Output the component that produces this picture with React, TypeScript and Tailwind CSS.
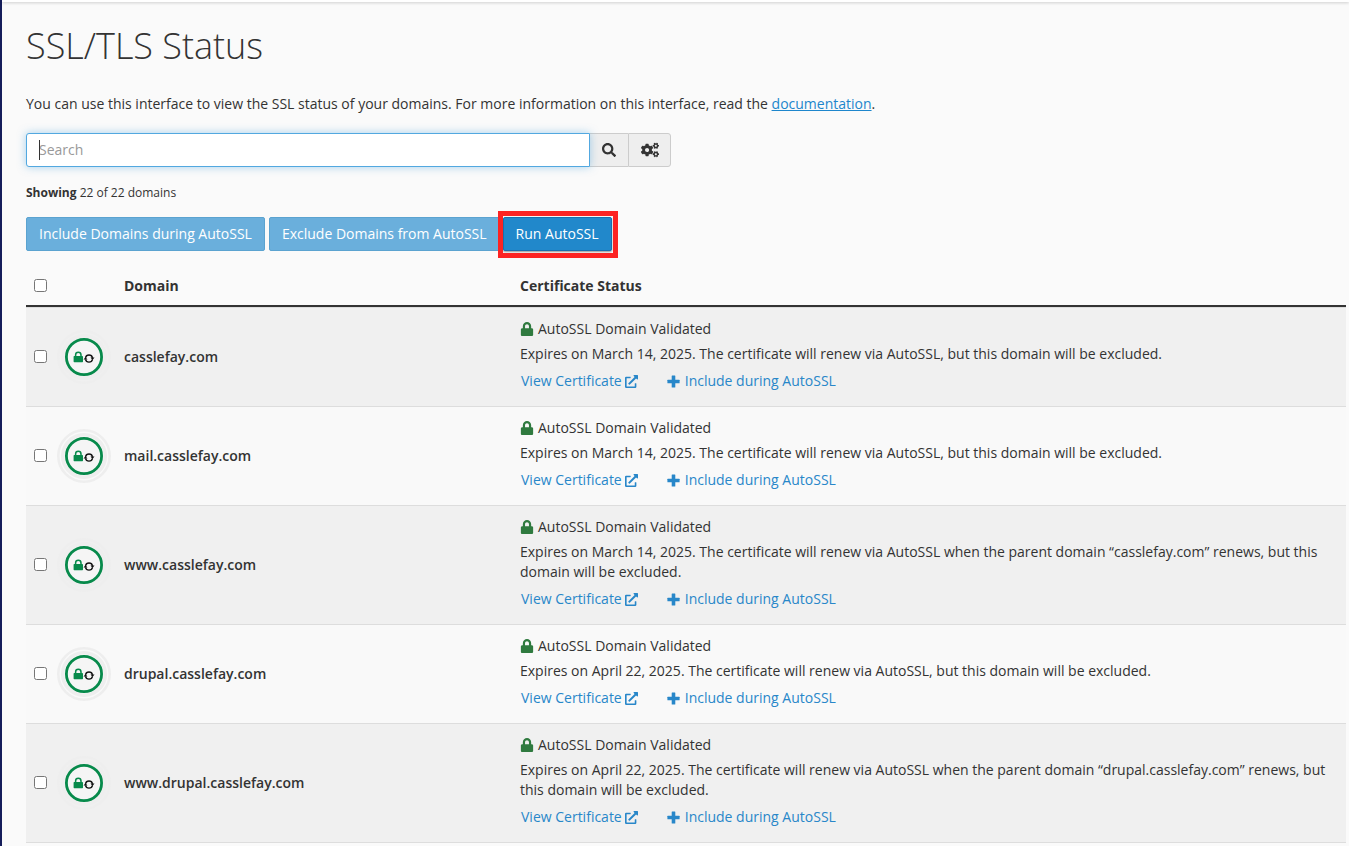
import { useState } from "react";
import { FaCogs, FaExternalLinkAlt, FaLock, FaSearch } from "react-icons/fa";

type Domain = { name: string; expires: string; parent?: string };

const domains: Domain[] = [
  { name: "casslefay.com", expires: "March 14, 2025" },
  { name: "mail.casslefay.com", expires: "March 14, 2025" },
  { name: "www.casslefay.com", expires: "March 14, 2025", parent: "casslefay.com" },
  { name: "drupal.casslefay.com", expires: "April 22, 2025" },
  { name: "www.drupal.casslefay.com", expires: "April 22, 2025", parent: "drupal.casslefay.com" },
];

function StatusBadge() {
  return (
    <svg className="block size-[54px]" viewBox="0 0 54 54" fill="none" aria-hidden="true">
      <circle cx="27" cy="27" r="25.7" stroke="#eeeeee" strokeWidth="2.6" />
      <circle cx="27" cy="27" r="21.3" stroke="#eeeeee" strokeWidth="3.6" />
      <circle cx="27" cy="27" r="17.6" fill="#f5f5f5" stroke="#078a4b" strokeWidth="2.8" />
      <rect x="16.6" y="26" width="9.4" height="6.2" rx="0.7" fill="#078a4b" />
      <path d="M18.6 26.4v-1.5a2.7 2.7 0 0 1 5.4 0v1.5" stroke="#078a4b" strokeWidth="1.5" />
      <path d="M28.5 27.8a3.6 3.6 0 0 1 7 0M35.5 29.4a3.6 3.6 0 0 1-7 0" stroke="#111" strokeWidth="1.4" />
      <path d="M33.5 27.6h4l-2 2.4zM26.5 29.6h4l-2-2.4z" fill="#111" />
    </svg>
  );
}

function PlusIcon() {
  return (
    <svg className="size-[13px]" viewBox="0 0 13 13" fill="currentColor" aria-hidden="true">
      <rect x="4.7" y="0.4" width="3.6" height="12.2" rx="0.5" />
      <rect x="0.4" y="4.7" width="12.2" height="3.6" rx="0.5" />
    </svg>
  );
}

function DomainRow({ domain, checked, onToggle }: { domain: Domain; checked: boolean; onToggle: () => void }) {
  return (
    <tr className="odd:bg-[#f0f0f0] even:bg-[#f9f9f9]">
      <td className="border-t border-[#dddddd] pb-0.5 pl-2">
        <input
          type="checkbox"
          aria-label={`Select ${domain.name}`}
          className="block size-[13px]"
          checked={checked}
          onChange={onToggle}
        />
      </td>
      <td className="border-t border-[#dddddd]">
        <StatusBadge />
      </td>
      <td className="border-t border-[#dddddd] pl-2 font-semibold">{domain.name}</td>
      <td className="border-t border-[#dddddd] pt-[11px] pr-2 pb-[15px] pl-2">
        <p className="flex items-center gap-1">
          <FaLock className="size-[14px] text-[#2f7a3f]" />
          AutoSSL Domain Validated
        </p>
        <p className="mt-[5px]">
          {domain.parent
            ? `Expires on ${domain.expires}. The certificate will renew via AutoSSL when the parent domain “${domain.parent}” renews, but this domain will be excluded.`
            : `Expires on ${domain.expires}. The certificate will renew via AutoSSL, but this domain will be excluded.`}
        </p>
        <div className="mt-[7px] flex gap-[29px] pl-px text-[#2887c9]">
          <a href="#certificate" className="flex items-center gap-[3px]">
            View Certificate
            <FaExternalLinkAlt className="size-[13px]" />
          </a>
          <button type="button" className="flex items-center gap-[5px]">
            <PlusIcon />
            Include during AutoSSL
          </button>
        </div>
      </td>
    </tr>
  );
}

export default function App() {
  const [query, setQuery] = useState("");
  const [selected, setSelected] = useState<string[]>([]);
  const allSelected = selected.length === domains.length;
  const toggle = (name: string) =>
    setSelected((s) => (s.includes(name) ? s.filter((n) => n !== name) : [...s, name]));

  return (
    <div className="min-h-screen border-l-2 border-[#151d5a] bg-[#fafafa] font-['Open_Sans','Noto_Sans',sans-serif] text-sm leading-5 text-[#333333]">
      <div className="h-0.5 bg-white shadow-[0_1px_3px_rgba(0,0,0,0.2)]" />
      <main className="pt-[22px] pr-[3px] pl-6">
        <h1 className="text-4xl leading-[44px] font-light">SSL/TLS Status</h1>
        <p className="mt-[26px]">
          You can use this interface to view the SSL status of your domains. For more information on this interface,
          read the{" "}
          <a href="#documentation" className="text-[#1d86cc] underline">
            documentation
          </a>
          .
        </p>

        <form className="mt-[19px] flex h-[34px] max-w-[645px]" onSubmit={(e) => e.preventDefault()}>
          <div className="relative flex-1">
            <input
              type="text"
              aria-label="Search"
              placeholder="Search"
              value={query}
              onChange={(e) => setQuery(e.target.value)}
              className="h-full w-full rounded-l-[3px] border border-[#52a8e0] bg-white px-3 pb-0.5 shadow-[0_0_8px_rgba(82,168,224,0.5)] outline-none placeholder:text-[#999999]"
            />
            <span className="absolute top-[7px] left-[13px] h-5 w-px bg-[#333333]" />
          </div>
          <button
            type="submit"
            aria-label="Search domains"
            className="flex w-[38px] items-center justify-center border-y border-[#cccccc] bg-[#eeeeee]"
          >
            <FaSearch className="size-[14px]" />
          </button>
          <button
            type="button"
            aria-label="Search options"
            className="flex w-[43px] items-center justify-center rounded-r-[3px] border border-[#cccccc] bg-[#eeeeee]"
          >
            <FaCogs className="size-[18px]" />
          </button>
        </form>

        <p className="mt-[17px] text-xs leading-[18px]">
          <strong className="font-bold">Showing</strong> 22 of 22 domains
        </p>

        <div className="mt-[15px] flex h-[34px] text-white">
          <button type="button" disabled className="mr-1 rounded-xs border border-[#5ba3d0] bg-[#6aafdc] px-3">
            Include Domains during AutoSSL
          </button>
          <button type="button" disabled className="rounded-xs border border-[#5ba3d0] bg-[#6aafdc] px-3">
            Exclude Domains from AutoSSL
          </button>
          <div className="relative ml-[3px]">
            <button
              type="button"
              className="h-full rounded-xs border border-[#1a6fae] bg-[#2188cb] px-3 shadow-[0_1px_2px_rgba(0,0,0,0.4)]"
            >
              Run AutoSSL
            </button>
            <span className="pointer-events-none absolute -top-[6px] -right-[6px] -bottom-[7px] -left-[5px] border-[5px] border-[#fc2323]" />
          </div>
        </div>

        <table className="mt-[15px] w-full table-fixed border-separate border-spacing-0 border-b border-[#dddddd] text-left">
          <colgroup>
            <col className="w-[31px]" />
            <col className="w-[59px]" />
            <col className="w-[30%]" />
            <col />
          </colgroup>
          <thead>
            <tr className="h-[41px]">
              <th className="border-b-2 border-[#333333] pl-2">
                <input
                  type="checkbox"
                  aria-label="Select all domains"
                  className="block size-[13px]"
                  checked={allSelected}
                  onChange={() => setSelected(allSelected ? [] : domains.map((d) => d.name))}
                />
              </th>
              <th aria-label="Status" className="border-b-2 border-[#333333]" />
              <th className="border-b-2 border-[#333333] pl-2 font-bold">Domain</th>
              <th className="border-b-2 border-[#333333] pl-2 font-bold">Certificate Status</th>
            </tr>
          </thead>
          <tbody>
            {domains.map((d) => (
              <DomainRow key={d.name} domain={d} checked={selected.includes(d.name)} onToggle={() => toggle(d.name)} />
            ))}
          </tbody>
        </table>
      </main>
    </div>
  );
}
